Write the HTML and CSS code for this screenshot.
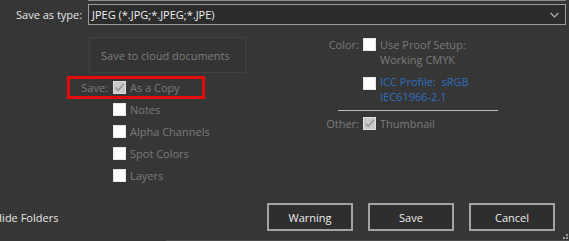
FILE: index.html
```html
<!DOCTYPE html>
<html>
<head>
<meta charset="utf-8">
<link rel="stylesheet" href="styles.css">
</head>
<body>
<div class="page">
  <div class="prev-field"></div>
  <div class="type-row">
    <span class="type-label">Save as type:</span>
    <div class="select">
      <span class="select-text">JPEG (*.JPG;*.JPEG;*.JPE)</span>
      <svg class="chev" width="9" height="6" viewBox="0 0 9 6"><path d="M0.5 0.8 L4.5 4.8 L8.5 0.8" fill="none" stroke="#bdbdbd" stroke-width="1.2"/></svg>
    </div>
  </div>
  <div class="options">
    <div class="left">
      <div class="cloud-btn">Save to cloud documents</div>
      <div class="save-group">
        <div class="highlight"></div>
        <div class="opt"><span class="lbl">Save:</span><span class="cb checked"><svg width="11" height="11" viewBox="0 0 11 11"><path d="M1.5 5.5 L4.2 8.3 L9.8 1.8" fill="none" stroke="#8c8c8c" stroke-width="1.2"/></svg></span><span class="txt">As a Copy</span></div>
        <div class="opt"><span class="lbl"></span><span class="cb"></span><span class="txt">Notes</span></div>
        <div class="opt"><span class="lbl"></span><span class="cb"></span><span class="txt">Alpha Channels</span></div>
        <div class="opt"><span class="lbl"></span><span class="cb"></span><span class="txt">Spot Colors</span></div>
        <div class="opt"><span class="lbl"></span><span class="cb"></span><span class="txt">Layers</span></div>
      </div>
    </div>
    <div class="right">
      <div class="ropt color-row"><span class="rlbl">Color:</span><span class="cb"></span><span class="rtxt">Use Proof Setup:<br>Working CMYK</span></div>
      <div class="ropt icc-row"><span class="rlbl"></span><span class="cb"></span><span class="rtxt blue">ICC Profile:&nbsp; sRGB<br>IEC61966-2.1</span></div>
      <div class="sep"></div>
      <div class="ropt other-row"><span class="rlbl">Other:</span><span class="cb checked"><svg width="11" height="11" viewBox="0 0 11 11"><path d="M1.5 5.5 L4.2 8.3 L9.8 1.8" fill="none" stroke="#8c8c8c" stroke-width="1.2"/></svg></span><span class="rtxt">Thumbnail</span></div>
    </div>
  </div>
  <div class="footer">
    <span class="hide-folders">Hide Folders</span>
    <div class="buttons">
      <button class="btn">Warning</button>
      <button class="btn">Save</button>
      <button class="btn">Cancel</button>
    </div>
  </div>
  <div class="bottom-line"></div>
  <svg class="grip" width="6" height="6" viewBox="0 0 6 6"><rect x="4" y="0" width="2" height="2" fill="#9a9a9a"/><rect x="1" y="3" width="2" height="2" fill="#9a9a9a"/><rect x="4" y="3" width="2" height="2" fill="#9a9a9a"/></svg>
</div>
</body>
</html>
```
FILE: styles.css
```css
html, body {
  margin: 0;
  padding: 0;
  background: #363636;
}
.page {
  position: relative;
  width: 569px;
  height: 241px;
  overflow: hidden;
  font-family: "Open Sans", "Noto Sans", sans-serif;
  font-size: 11px;
  color: #e8e8e8;
}
.prev-field {
  margin-left: 88px;
  width: 478px;
  height: 1px;
  background: #8a8a8a;
}
.type-row {
  display: flex;
  align-items: center;
  margin-top: 3px;
  height: 21px;
}
.type-label {
  width: 82px;
  padding-left: 16px;
  box-sizing: border-box;
  white-space: nowrap;
  color: #e6e6e6;
}
.select {
  margin-left: 6px;
  width: 478px;
  height: 21px;
  box-sizing: border-box;
  border: 1px solid #9c9c9c;
  background: #2c2c2c;
  display: flex;
  align-items: center;
  justify-content: space-between;
  padding: 0 6px 0 3px;
}
.select-text {
  color: #f0f0f0;
  white-space: nowrap;
}
.chev {
  display: block;
}
.options {
  display: flex;
  margin-top: 12px;
  padding-left: 67px;
  height: 150px;
}
.left {
  width: 259px;
}
.cloud-btn {
  margin-left: 22px;
  width: 157px;
  height: 36px;
  box-sizing: border-box;
  border: 1px solid #424242;
  background: #343434;
  color: #7c7c7c;
  display: flex;
  align-items: center;
  padding-left: 11px;
  white-space: nowrap;
}
.save-group {
  position: relative;
  margin-top: 3px;
}
.highlight {
  position: absolute;
  left: 0;
  top: 0;
  width: 138px;
  height: 23px;
  box-sizing: border-box;
  border: 3px solid #e30b0b;
}
.opt {
  display: flex;
  align-items: center;
  height: 22px;
  color: #7a7a7a;
  white-space: nowrap;
}
.lbl {
  width: 42px;
  text-align: right;
  box-sizing: border-box;
  padding-right: 1px;
}
.cb {
  width: 13px;
  height: 13px;
  box-sizing: border-box;
  background: #ffffff;
  border: 1px solid #e8e8e8;
  margin-left: 4px;
  margin-right: 4px;
  flex: none;
  display: flex;
  align-items: center;
  justify-content: center;
}
.cb.checked {
  background: #c9c9c9;
  border-color: #dedede;
}
.cb svg {
  display: block;
}
.right {
  width: 243px;
}
.ropt {
  display: flex;
  align-items: flex-start;
  line-height: 15px;
  color: #7a7a7a;
  white-space: nowrap;
}
.ropt .cb {
  margin-top: 1px;
}
.rlbl {
  width: 33px;
  text-align: right;
}
.icc-row {
  margin-top: 7px;
}
.icc-row .cb {
  margin-top: 3px;
}
.blue {
  color: #2f6fc0;
}
.sep {
  margin-top: 6px;
  margin-left: 12px;
  width: 160px;
  height: 1px;
  background: #bdbdbd;
}
.other-row {
  margin-top: 5px;
}
.footer {
  display: flex;
  align-items: center;
  justify-content: space-between;
  margin-top: 16px;
  height: 28px;
}
.hide-folders {
  margin-left: -6px;
  margin-top: 1px;
  color: #e6e6e6;
  white-space: nowrap;
}
.buttons {
  display: flex;
  gap: 15px;
  padding-right: 14px;
}
.btn {
  width: 86px;
  height: 28px;
  box-sizing: border-box;
  border: 2px solid #a3a3a3;
  background: #2e2e2e;
  color: #ececec;
  font-family: inherit;
  font-size: 11px;
  padding: 0;
}
.bottom-line {
  position: absolute;
  left: 166px;
  right: 0;
  bottom: 0;
  height: 1px;
  background: #4b4b4b;
}
.grip {
  position: absolute;
  right: 1px;
  bottom: 1px;
}
```
